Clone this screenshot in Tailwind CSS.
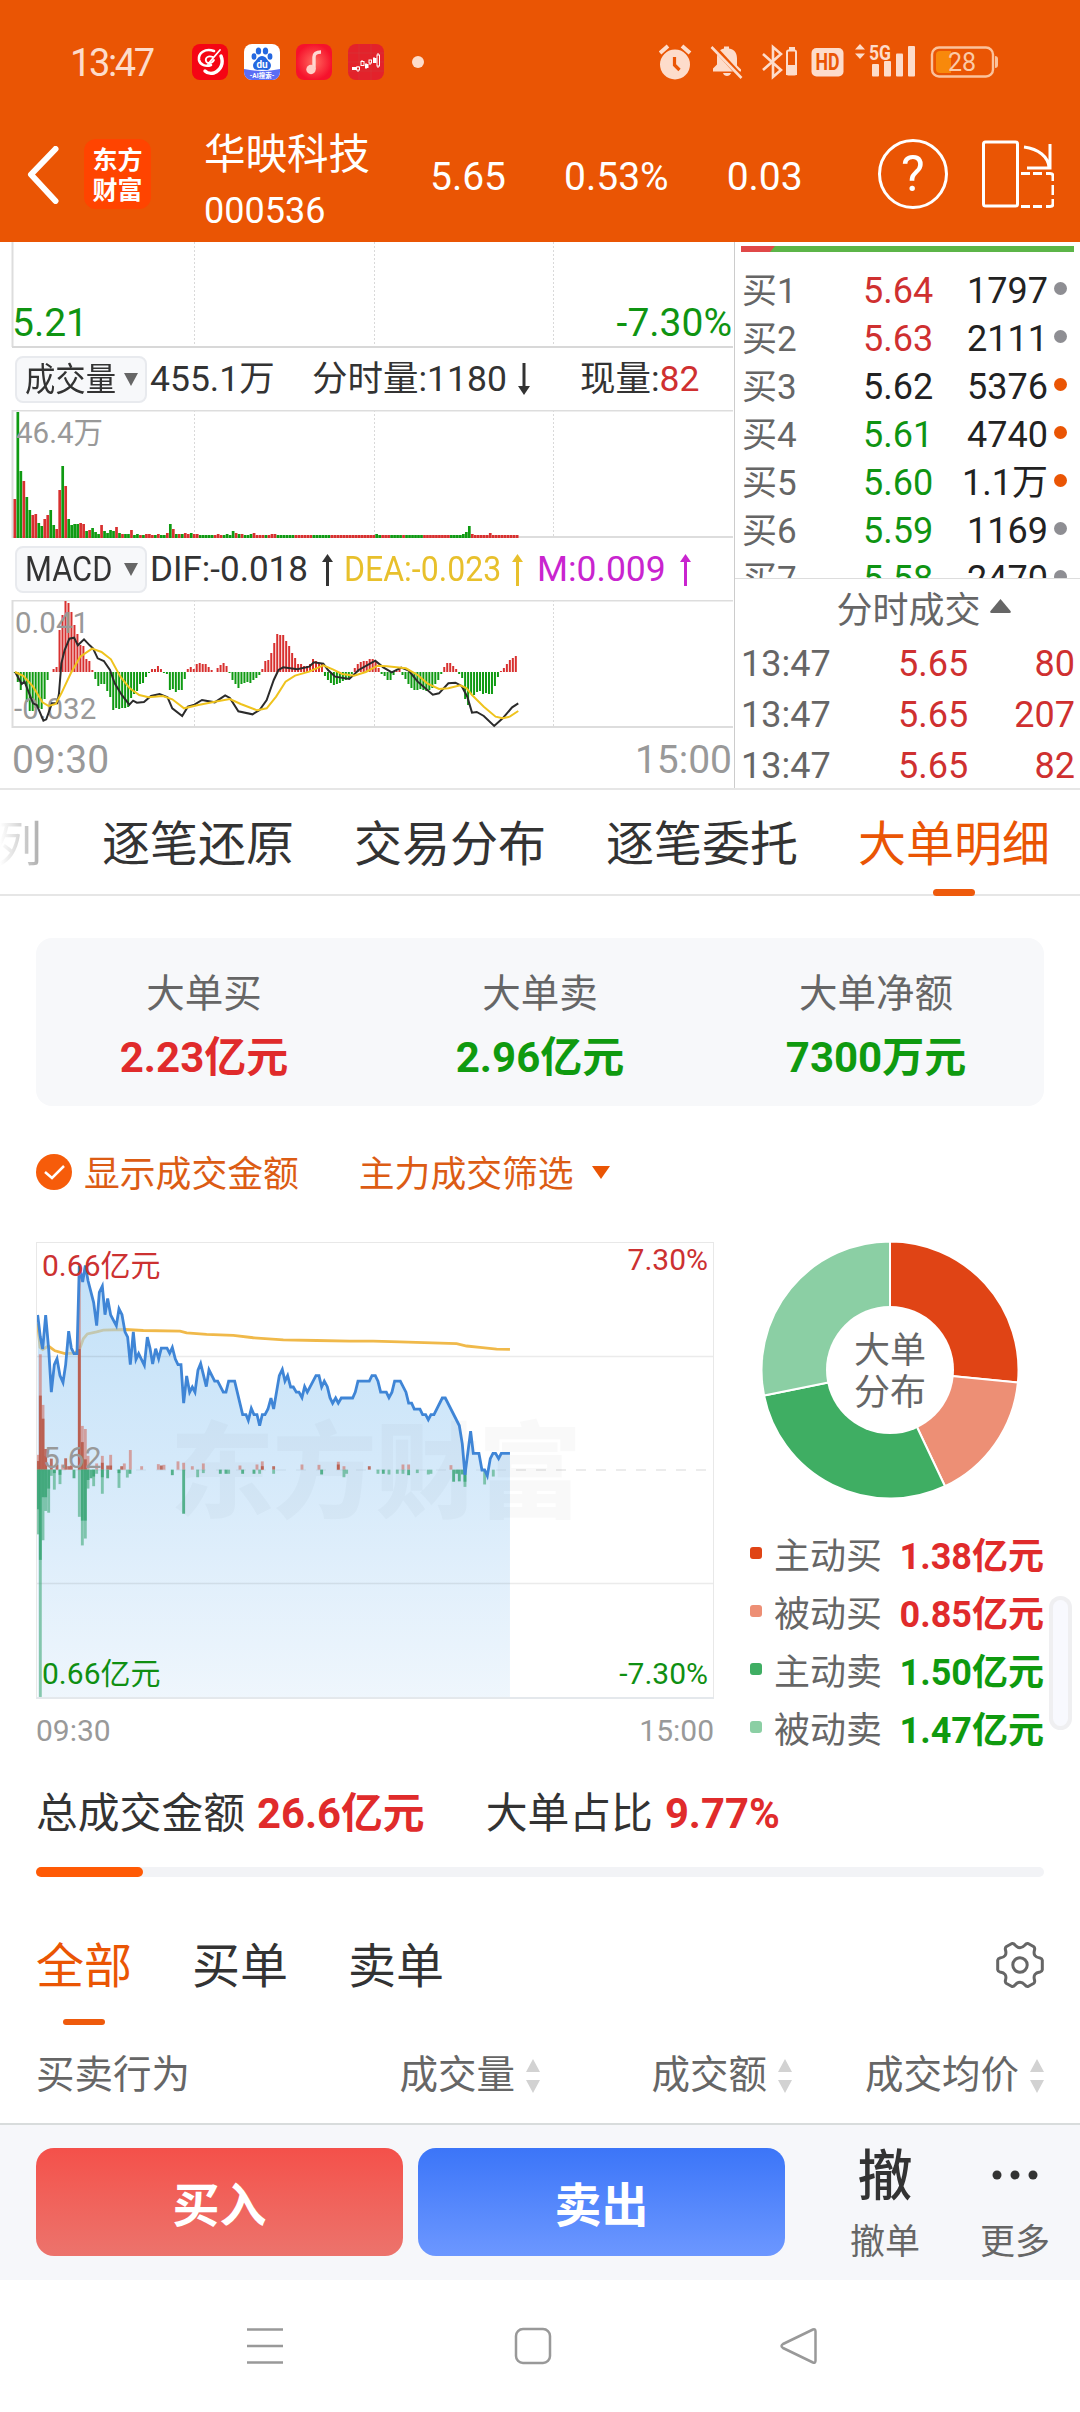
<!DOCTYPE html>
<html lang="zh-CN">
  <head>
    <meta charset="UTF-8" />
    <meta name="viewport" content="width=device-width, initial-scale=1.0" />
    <title>华映科技 000536</title>
    <script src="https://cdn.jsdelivr.net/npm/@tailwindcss/browser@4"></script>
  </head>
  <body class="w-[1080px] h-[2412px] overflow-hidden bg-white text-[#333] leading-none whitespace-nowrap font-['Roboto','Noto_Sans_CJK_SC',sans-serif]">
    <!-- Status bar + stock header -->
    <header class="h-[242px] bg-[#ea5504] text-white">
      <div class="h-[124px] flex items-center text-[#fddccb]">
        <span class="w-[122px] ml-[70px] pt-[2px] text-[38px] tracking-[-2.4px]">13:47</span>
        <div class="flex items-center gap-4">
          <svg class="size-9" viewBox="0 0 36 36">
            <rect width="36" height="36" rx="8" fill="#f50514" />
            <g fill="none" stroke="#fff" stroke-linecap="round">
              <path d="M22 7C13 4 6 9 7 16c1 5 7 7 12 5" stroke-width="2.600" />
              <path d="M29 12c3 7 0 14-7 17-4 1-7 0-9-2" stroke-width="3.400" />
              <path d="M28 6 16 20M21 13c-5-2-8 1-7 4s6 3 8-1" stroke-width="1.800" />
            </g>
          </svg>
          <svg class="size-9" viewBox="0 0 36 36">
            <rect width="36" height="36" rx="8" fill="#fff" />
            <path d="M0 25q18 4 36 0v3a8 8 0 0 1-8 8H8a8 8 0 0 1-8-8z" fill="#5a6df5" />
            <g fill="#2467e0">
              <ellipse cx="14.5" cy="7" rx="2.7" ry="3.6" />
              <ellipse cx="21.5" cy="7" rx="2.7" ry="3.6" />
              <ellipse cx="10" cy="12.5" rx="2.4" ry="3.3" />
              <ellipse cx="26" cy="12.5" rx="2.4" ry="3.3" />
              <path d="M18 12c4 0 5 4 7.500 6 3 3 1 8-3 8-3 0-6-.5-9 0-4 0-6-5-3-8 2.500-2 3.500-6 7.500-6z" />
            </g>
            <text x="18" y="24" font-size="10" font-weight="700" fill="#fff" text-anchor="middle">du</text>
            <text x="18" y="34" font-size="6.500" font-weight="700" fill="#fff" text-anchor="middle">-AI搜索-</text>
          </svg>
          <svg class="size-9" viewBox="0 0 36 36">
            <defs>
              <radialGradient id="music"><stop offset="0" stop-color="#ff6a5e" /><stop offset="1" stop-color="#f6122c" /></radialGradient>
            </defs>
            <rect width="36" height="36" rx="8" fill="url(#music)" />
            <path d="M18 25V13c0-3 2-5 7-5" fill="none" stroke="#ffd9d2" stroke-width="3.400" />
            <circle cx="15" cy="25.500" r="4.700" fill="#ffd0c8" />
          </svg>
          <svg class="size-9" viewBox="0 0 36 36">
            <rect width="36" height="36" rx="8" fill="#e3222b" />
            <path d="M0 9h36M0 18h36M0 27h36M11 0v36M23 0v36" stroke="#d53a3a" stroke-width=".6" />
            <path d="M4 25h4M10 22v6M14 16v6M18 19v6M22 16v5M26 13v6M30 9v15" stroke="#fff" stroke-width="1" />
            <g fill="#fff">
              <rect x="4" y="23" width="4" height="3" /><rect x="17" y="20" width="3.500" height="4" /><rect x="25" y="14" width="3.500" height="5" />
            </g>
            <g fill="#e3222b" stroke="#fff">
              <rect x="8.500" y="23" width="3" height="3" /><rect x="13" y="17.500" width="3" height="4" /><rect x="21" y="16" width="2.500" height="3" /><rect x="29" y="11" width="2.500" height="11" />
            </g>
          </svg>
        </div>
        <span class="size-3 ml-7 rounded-full bg-[#fddccb]"></span>

        <svg class="ml-[235px] w-[342px] h-9" viewBox="0 0 342 36" fill="#fddccb">
          <!-- alarm -->
          <g>
            <circle cx="16" cy="20.500" r="15" />
            <path d="m1 9 8-7M31 9l-8-7" stroke="#fddccb" stroke-width="4" />
            <path d="M15.500 13v8l5 5" fill="none" stroke="#ea5504" stroke-width="3.200" />
          </g>
          <!-- muted bell -->
          <path d="M65 2.500h5v2c6 1 8 5 8 10v7l4 4v2H54v-3l4-4v-7c0-5 2-8 7-9zM64 29h8c-1 4-7 4-8 0z" />
          <path d="m53 1 31 34" stroke="#ea5504" stroke-width="5" />
          <path d="m52.500 3 30 31" stroke="#fddccb" stroke-width="2.600" />
          <!-- bluetooth -->
          <path d="m104 10 18 16-8 7V3l8 7-18 16" fill="none" stroke="#fddccb" stroke-width="2.600" />
          <rect x="128" y="6.500" width="9" height="24" rx="1.500" fill="none" stroke="#fddccb" stroke-width="2" />
          <path d="M127 21h11v10h-11zM130 3h6v3h-6z" />
          <!-- HD -->
          <rect x="152.500" y="4" width="32" height="28.500" rx="5" />
          <text x="168.500" y="26" font-size="23" font-weight="700" fill="#ea5504" text-anchor="middle" textLength="24" lengthAdjust="spacingAndGlyphs">HD</text>
          <!-- signal -->
          <path d="m201 0 5 5.500h-10zM201 15l5-5.500h-10z" />
          <text x="210" y="16" font-size="21" font-weight="700" textLength="22" lengthAdjust="spacingAndGlyphs">5G</text>
          <rect x="213" y="20" width="7" height="12.500" rx="1" /><rect x="225" y="17" width="7" height="15.500" rx="1" />
          <rect x="237" y="9.500" width="7" height="23" rx="1" /><rect x="249" y="2" width="7" height="30.500" rx="1" />
          <!-- battery -->
          <rect x="273" y="3.500" width="61" height="29" rx="7" fill="none" stroke="#fbc29c" stroke-width="2.400" />
          <path d="M281 7h11v22h-11a4 4 0 0 1-4-4V11a4 4 0 0 1 4-4z" fill="#f8890b" />
          <path d="M336 12q3 0 3 3v6q0 3-3 3z" fill="#fbc29c" />
          <text x="303" y="27" font-size="25" fill="#fbcaa8" text-anchor="middle">28</text>
        </svg>
      </div>

      <div class="h-[118px] flex items-start">
        <svg class="w-8 h-[58px] ml-[27px] mt-[22px]" viewBox="0 0 32 58" fill="none" stroke="#fff" stroke-width="6" stroke-linecap="round" stroke-linejoin="round">
          <path d="M28.500 3 4 28.500 28.500 55" />
        </svg>
        <div class="w-[67px] h-[70px] ml-[25px] mt-[15px] rounded-xl bg-[#ff4400] flex flex-col items-center justify-center pt-1 text-[25px] leading-[30px] font-bold">
          <span>东方</span><span>财富</span>
        </div>
        <div class="w-[226px] ml-[53px] mt-[6px]">
          <div class="text-[41.500px] leading-[50px]">华映科技</div>
          <div class="text-[36px] leading-[62px]">000536</div>
        </div>
        <div class="flex gap-[58px] text-[39px] leading-[106px]">
          <span>5.65</span><span>0.53%</span><span>0.03</span>
        </div>
        <div class="size-[70px] ml-[75px] mt-[15px] rounded-full border-3 flex items-center justify-center text-[50px]">?</div>
        <svg class="w-[73px] h-[68px] ml-[33px] mt-4" viewBox="0 0 73 68" fill="none" stroke="#fff" stroke-width="3">
          <rect x="2.500" y="2" width="34" height="64" rx="2" />
          <path d="M43 7c15 2 24 10 25 20M69 4v24H46" />
          <path d="M40 33.500h9m3 0h9m4 0h4q3 0 3 2.500v5m0 4v10m0 4v5q0 2.500-3 2.500h-4m-4 0h-9m-3 0h-9" />
        </svg>
      </div>
    </header>

    <!-- Intraday indicators + order book -->
    <section class="h-[548px] flex border-b-2 border-[#e6e6e6]">
      <div class="w-[735px] border-r border-[#ccc]">
        <svg class="block" width="734" height="106">
          <path d="M12.500 0v105" stroke="#ddd" stroke-width="2" />
          <path d="M194.500 0v105M374.500 0v105M553.500 0v105" stroke="#d9d9d9" stroke-dasharray="2 2" />
          <path d="M12 105h721" stroke="#d8d8d8" stroke-width="2" />
          <g font-size="39" fill="#0f9412">
            <text x="12" y="94">5.21</text>
            <text x="732" y="94" text-anchor="end">-7.30%</text>
          </g>
        </svg>

        <div class="h-[62px] flex items-center pl-[15px] text-[35px]">
          <div class="w-[132px] h-[47px] shrink-0 rounded-lg border-2 border-[#e8eaee] bg-[#f7f8fa] flex items-center gap-2 pl-2">
            <span class="text-[33px] w-[91px]"><span class="inline-block origin-left scale-x-[.92]">成交量</span></span>
            <svg width="14" height="13"><path d="M0 0h14L7 13z" fill="#666" /></svg>
          </div>
          <span class="ml-[3px] w-[162px] pt-[2px] text-[35.500px]">455.1万</span>
          <span class="pt-[2px] text-[35.500px]">分时量:1180</span>
          <svg class="ml-[11px]" width="12" height="32"><path d="M6 0v26" stroke="#333" stroke-width="3" /><path d="M0 23h12L6 32z" fill="#333" /></svg>
          <span class="ml-[50px] pt-[2px] text-[35.500px]">现量:<span class="text-[#cf3030]">82</span></span>
        </div>

        <svg class="block" width="734" height="129">
          <path d="M194.500 0v127M374.500 0v127M553.500 0v127" stroke="#d9d9d9" stroke-dasharray="2 2" />
          <path d="M12 .5h721M12.500 0v128M12 127h721" fill="none" stroke="#ddd" stroke-width="2" />
          <g id="volume"></g>
          <text x="16" y="33" font-size="29.500" fill="#999">46.4万</text>
        </svg>

        <div class="h-[61px] flex items-center pl-[15px] text-[35px]">
          <div class="w-[132px] h-[47px] shrink-0 rounded-lg border-2 border-[#e8eaee] bg-[#f7f8fa] flex items-center gap-2 pl-2">
            <span class="text-[35px] w-[91px]"><span class="inline-block origin-left scale-x-[.88]">MACD</span></span>
            <svg width="14" height="13"><path d="M0 0h14L7 13z" fill="#666" /></svg>
          </div>
          <span class="ml-[3px] w-[172px]">DIF:-0.018</span>
          <svg width="11" height="32"><path d="M5.500 6v26" stroke="#333" stroke-width="3" /><path d="M0 8h11L5.500 0z" fill="#333" /></svg>
          <span class="ml-[11px] w-[168px] text-[#e8c02c]"><span class="inline-block origin-left scale-x-[.915]">DEA:-0.023</span></span>
          <svg width="11" height="32"><path d="M5.500 6v26" stroke="#e8c02c" stroke-width="3" /><path d="M0 8h11L5.500 0z" fill="#e8c02c" /></svg>
          <span class="ml-[14px] w-[143px] text-[35.500px] text-[#c924cf]">M:0.009</span>
          <svg width="11" height="32"><path d="M5.500 6v26" stroke="#c924cf" stroke-width="3" /><path d="M0 8h11L5.500 0z" fill="#c924cf" /></svg>
        </div>

        <svg class="block" width="734" height="129">
          <path d="M194.500 0v127M374.500 0v127M553.500 0v127" stroke="#d9d9d9" stroke-dasharray="2 2" />
          <path d="M12 .5h721M12.500 0v128M12 127h721" fill="none" stroke="#ddd" stroke-width="2" />
          <g id="macd"></g>
          <g font-size="29.500" fill="#999"><text x="15" y="33">0.041</text><text x="14" y="119">-0.032</text></g>
          <g transform="scale(.472 .3333) translate(0 -180)" fill="none" stroke-width="2">
            <polyline vector-effect="non-scaling-stroke" stroke="#2b2b2b" points="32,396 46,432 52,425 70,490 78,495 92,542 98,538 110,490 121,490 125,460 130,370 137,330 147,296 157,293 165,316 178,298 190,316 197,325 207,355 220,363 233,390 243,430 258,465 274,494 282,482 290,488 305,486 320,468 338,462 355,472 365,505 386,528 398,500 412,494 428,480 455,487 477,466 487,474 505,514 535,523 550,510 565,480 580,420 590,390 600,382 630,388 655,380 665,367 685,371 695,390 710,410 740,417 760,390 795,362 812,382 830,397 850,383 866,392 885,425 917,464 930,460 950,430 965,428 978,438 990,470 1000,518 1010,516 1025,528 1047,558 1065,535 1085,502 1098,490" />
            <polyline vector-effect="non-scaling-stroke" stroke="#efc31d" points="32,396 50,408 70,440 90,487 103,498 118,492 130,460 150,400 170,350 195,326 215,336 235,358 255,410 275,445 295,465 315,472 345,468 365,478 390,505 420,495 455,485 487,477 510,492 545,511 565,505 585,470 605,425 625,407 655,395 685,376 705,388 725,402 750,407 775,396 800,377 820,379 860,385 885,405 905,430 930,447 950,445 975,436 988,444 1000,465 1025,500 1050,530 1065,535 1080,530 1098,513" />
          </g>
        </svg>
        <div class="h-[62px] flex items-center justify-between pl-3 pr-[2px] text-[39px] text-[#999]">
          <span>09:30</span><span>15:00</span>
        </div>
      </div>

      <div class="flex-1 text-[36px]">
        <div class="h-[337px] overflow-hidden border-b border-[#ddd]">
          <svg class="block ml-[6px] mt-1" width="333" height="6"><path d="M0 0h333v6H0z" fill="#5cb548" /><path d="M0 0h34l-5 6H0z" fill="#e04848" /></svg>
          <div id="bids" class="mt-[15px]"></div>
        </div>
        <div class="h-[60px] flex items-center justify-center gap-[9px] pl-[32px] pt-[3px] text-[#666]">
          分时成交
          <svg class="mb-[10px]" width="21" height="14"><path d="m10.500 0 10 12q1 2-1 2h-18q-2 0-1-2z" fill="#666" /></svg>
        </div>
        <div id="ticks" class="-mt-[1px]"></div>
      </div>
    </section>

    <!-- Detail tabs -->
    <nav class="h-[106px] flex gap-[60px] border-b-2 border-[#e6e6e6] text-[48px] leading-[110px]">
      <span class="w-[42px] flex justify-end bg-linear-to-r from-white to-[#aaa] bg-clip-text text-transparent">列</span>
      <span>逐笔还原</span>
      <span>交易分布</span>
      <span>逐笔委托</span>
      <span class="relative h-[106px] text-[#ea5504]">大单明细<i class="absolute left-[75px] bottom-0 w-[42px] h-[7px] rounded-full bg-[#ee5a0c]"></i></span>
    </nav>

    <main class="h-[1227px] px-9 pt-[42px]">
      <!-- Totals -->
      <div class="h-[168px] rounded-2xl bg-[#f7f8fa] grid grid-cols-3 text-center">
        <div><div class="text-[38.500px] leading-[111px] h-[86px] text-[#666]">大单买</div><div class="text-[42px] leading-[67px] font-bold text-[#e02b2b]">2.23亿元</div></div>
        <div><div class="text-[38.500px] leading-[111px] h-[86px] text-[#666]">大单卖</div><div class="text-[42px] leading-[67px] font-bold text-[#0f9a0f]">2.96亿元</div></div>
        <div><div class="text-[38.500px] leading-[111px] h-[86px] text-[#666]">大单净额</div><div class="text-[42px] leading-[67px] font-bold text-[#0f9a0f]">7300万元</div></div>
      </div>

      <!-- Filters -->
      <div class="h-[136px] flex items-center text-[35.800px] text-[#dc5c14]">
        <svg class="mb-1" width="36" height="36"><circle cx="18" cy="18" r="18" fill="#f65c0a" /><path d="m9 18 7 6 12-12" fill="none" stroke="#fff" stroke-width="2.500" /></svg>
        <span class="ml-[12px] pt-[3px]">显示成交金额</span>
        <span class="ml-[60px] pt-[3px]">主力成交筛选</span>
        <svg class="ml-[18px] mb-1" width="18" height="13"><path d="M0 0h18L9 13z" fill="#ea5504" /></svg>
      </div>

      <div class="h-[518px] flex justify-between">
        <!-- Big order flow chart -->
        <div class="w-[678px]">
          <svg class="block" width="678" height="458">
            <defs>
              <linearGradient id="area" x1="0" y1="0" x2="0" y2="1"><stop offset="0" stop-color="#9bcdf3" /><stop offset=".5" stop-color="#bbdcf7" /><stop offset="1" stop-color="#e4f0fb" /></linearGradient>
            </defs>
            <path d="M0 228h678" stroke="#000" stroke-opacity=".1" stroke-width="1.500" stroke-dasharray="10 10" />
            <polyline transform="scale(.3333 .3444) translate(-108 -64)" fill="none" stroke="#f0b94a" stroke-width="2.800" vector-effect="non-scaling-stroke" points="113,300 120,370 128,376 145,366 165,380 195,388 225,387 240,372 250,345 262,331 290,325 310,320 375,318 430,321 540,323 560,328 620,332 700,335 760,342 850,348 950,350 1050,352 1120,352 1200,354 1370,359 1400,366 1440,370 1490,375 1530,376" />
            <g transform="scale(.3333 .3444) translate(-108 -64)">
              <path id="price-area" fill="url(#area)" fill-opacity=".6" />
            </g>
            <path d="M0 114.500h678M0 341.500h678" stroke="#000" stroke-opacity=".08" stroke-width="1.500" />
            <text x="134" y="268" font-size="104" font-weight="900" fill="#000" fill-opacity=".025" textLength="412">东方财富</text>
            <g transform="scale(.3333 .3444) translate(-108 -64)">
              <g id="flow"></g>
              <polyline id="price" fill="none" stroke="#3f85d6" stroke-width="2.800" vector-effect="non-scaling-stroke" points="113,276 121,340 128,375 137,276 146,375 154,500 163,420 171,403 180,452 189,472 197,420 206,323 214,372 222,388 231,388 238,132 248,180 256,132 264,176 281,240 290,307 298,210 307,192 315,275 323,228 332,276 349,307 357,258 366,275 375,325 383,340 391,420 400,325 408,405 416,388 433,422 442,340 450,372 458,418 467,374 476,403 484,372 501,372 509,387 517,370 526,404 534,420 543,420 551,532 560,453 569,500 577,485 585,500 594,436 602,417 619,484 627,435 644,468 653,468 670,500 678,500 686,468 704,468 728,565 738,565 745,582 754,547 762,565 771,565 779,597 787,565 795,565 804,549 813,517 821,549 838,452 847,434 855,468 863,452 872,485 880,485 889,500 897,500 906,516 914,484 922,500 948,452 957,452 965,485 973,468 982,484 990,516 998,532 1007,517 1015,532 1024,517 1058,517 1066,500 1074,468 1108,468 1116,452 1126,452 1134,468 1142,500 1159,500 1167,516 1176,500 1184,468 1201,468 1218,500 1226,532 1235,532 1243,549 1260,549 1268,565 1277,565 1285,580 1293,565 1302,565 1327,517 1336,517 1378,597 1387,650 1395,740 1412,613 1420,678 1437,678 1446,726 1454,726 1462,743 1471,693 1479,678 1487,678 1496,693 1504,678 1530,678" />
            </g>
            <path d="M0 .5h678M.5 0v457M677.500 0v457" stroke="#e8e8e8" />
            <path d="M0 456h678" stroke="#e4e8ec" stroke-width="2" />
            <g font-size="30">
              <text x="6" y="34" fill="#cc3131">0.66亿元</text>
              <text x="672" y="28" text-anchor="end" fill="#cc3131">7.30%</text>
              <text x="7" y="226" fill="#999">5.62</text>
              <text x="6" y="442" fill="#0f8f12">0.66亿元</text>
              <text x="672" y="442" text-anchor="end" fill="#0f8f12">-7.30%</text>
            </g>
          </svg>
          <div class="flex justify-between pt-[16px] text-[30px] leading-[30px] text-[#999]"><span>09:30</span><span>15:00</span></div>
        </div>

        <!-- Distribution -->
        <div class="w-[294px] flex flex-col">
          <svg class="ml-[11px]" width="258" height="258" viewBox="-129 -128 258 258">
            <g stroke="#fff" stroke-width="2">
              <path d="M0-128.500A128.500 128.500 0 0 1 127.900 12.500L0 0z" fill="#e04415" />
              <path d="M127.900 12.500A128.500 128.500 0 0 1 55 116.200L0 0z" fill="#ed8f75" />
              <path d="M55 116.200A128.500 128.500 0 0 1-125.900 25.600L0 0z" fill="#3fae63" />
              <path d="M-125.900 25.600A128.500 128.500 0 0 1 0-128.500L0 0z" fill="#8bcfa4" />
            </g>
            <circle r="64" fill="#fff" />
            <g font-size="36" fill="#666" text-anchor="middle"><text y="-7">大单</text><text y="35">分布</text></g>
          </svg>
          <div id="legend" class="mt-[26px] text-[36px]"></div>
        </div>
      </div>

      <!-- Turnover share -->
      <div class="h-[107px] flex items-center text-[41.800px]">
        <span>总成交金额</span>
        <b class="ml-3 text-[#e02b2b]">26.6亿元</b>
        <span class="ml-[61px]">大单占比</span>
        <b class="ml-3 text-[#e02b2b]">9.77%</b>
      </div>
      <div class="h-[10px] rounded-full bg-[#f2f3f6]"><div class="h-full w-[107px] rounded-full bg-[#ff5a05]"></div></div>

      <!-- Order list -->
      <div class="h-[148px] pt-[65px] flex justify-between text-[48px] leading-[50px]">
        <div class="flex gap-[60px]">
          <span class="relative text-[#ea5504]">全部<i class="absolute left-[27px] top-[77px] w-[42px] h-[6px] rounded-full bg-[#ee5a0c]"></i></span>
          <span>买单</span>
          <span>卖单</span>
        </div>
        <svg class="w-[50px] h-12 -mr-[1px]" viewBox="-25 -23 50 48" fill="none" stroke="#666" stroke-width="3" stroke-linejoin="round">
          <path d="M-8.500-21.300Q-6.500-22-5-20Q0-14.500 5-20Q6.500-22 8.500-21.300L13.500-18.500Q15.200-17.300 14.500-15Q12.500-8 20-7Q22-6.600 22.300-4.800V4.800Q22 6.600 20 7Q12.500 8 14.500 15Q15.200 17.300 13.500 18.500L8.500 21.300Q6.500 22 5 20Q0 14.500-5 20Q-6.500 22-8.500 21.300L-13.500 18.500Q-15.200 17.300-14.500 15Q-12.500 8-20 7Q-22 6.600-22.300 4.800V-4.800Q-22-6.600-20-7Q-12.500-8-14.500-15Q-15.200-17.300-13.500-18.500z" />
          <circle r="7.200" />
        </svg>
      </div>
      <div class="h-[98px] pt-[3px] grid grid-cols-[314px_190px_252px_252px] items-center text-[38.500px] text-[#666]" id="columns"></div>
    </main>

    <!-- Trade actions -->
    <footer class="h-[157px] bg-[#f6f7fa] border-t-2 border-[#d8dcdc] pl-9 pt-[23px] flex">
      <button class="w-[367px] h-[108px] pt-[6px] rounded-[18px] bg-linear-to-b from-[#f4504a] to-[#ec736c] text-[47px] font-bold text-white">买入</button>
      <button class="w-[367px] h-[108px] pt-[6px] ml-[15px] rounded-[18px] bg-linear-to-b from-[#3b75f8] to-[#6c97ff] text-[47px] font-bold text-white">卖出</button>
      <div class="w-[70px] ml-[65px] flex flex-col items-center">
        <span class="text-[55px] leading-[56px] font-medium">撤</span>
        <span class="mt-[21px] text-[35px] text-[#666]">撤单</span>
      </div>
      <div class="w-[70px] ml-[60px] flex flex-col items-center">
        <svg width="50" height="56" fill="#333"><circle cx="7" cy="27" r="4.500" /><circle cx="25" cy="27" r="4.500" /><circle cx="43" cy="27" r="4.500" /></svg>
        <span class="mt-[21px] text-[35px] text-[#666]">更多</span>
      </div>
    </footer>

    <!-- System navigation -->
    <div class="h-[132px] flex items-center pl-[246px] gap-[230px]">
      <svg width="38" height="38" stroke="#999" stroke-width="2.500"><path d="M1 2.500h36M1 19h36M1 35.500h36" /></svg>
      <svg width="38" height="38" fill="none" stroke="#999" stroke-width="2.500"><rect x="2" y="2" width="34" height="34" rx="7" /></svg>
      <svg class="-ml-[2px]" width="38" height="38" fill="none" stroke="#999" stroke-width="2.500" stroke-linejoin="round"><path d="M33 2.500q2.500-1 2.500 2v29q0 3-2.500 2L3 21q-3-2 0-4z" /></svg>
    </div>

    <!-- Floating edge handle -->
    <div class="absolute left-[1053px] top-[1600px] w-[15px] h-[126px] rounded-full bg-[#f8f9fe] ring-4 ring-[#efeff1]"></div>

    <script>
      const RED = "#d8302f";
      const GREEN = "#0f9a12";
      const bar = (x, y, w, h, fill) => `<rect x="${x}" y="${y}" width="${w}" height="${h}" fill="${fill}"/>`;

      // Volume per minute, minus sign = falling minute
      const volume = [
        39, -126, -67, 57, -41, -28, 23, 24, -15, -12, 19, 23, -28, -13, 9, 48, -72, 52, -19, -13, -14, -14, 15, 14,
        -7, 8, -10, -6, -4, 13, -7, -5, -8, -7, 11, -5, 4, -4, -4, 8, -3, -4, 3, -3, 4, 4, 3, -3, 4, -3, -3, 5, -14, 9,
        -4, 4, -4, 5, 4, -5, 4, 4, -3, -3, -3, -3, -3, 3, 4, 3, -3, -4, -3, -7, 5, -4, 4, -3, -3, -4, 5, 3, 3, 3, -3, 3, 4, 4,
      ];
      while (volume.length < 169) {
        const i = volume.length;
        const up = (i > 93 && i < 100) || (i > 105 && i < 121) || (i > 122 && i < 126) || (i > 129 && i < 131) || (i > 136 && i < 146) || i > 152;
        volume.push(up ? 3 : -3);
      }
      volume[121] = -4;
      volume[150] = -4;
      volume[151] = -6;
      volume[152] = -12;
      volume[153] = 4;
      volume[159] = 5;
      document.getElementById("volume").innerHTML = volume
        .map((v, i) => bar(13.5 + i * 2.99, 128 - Math.abs(v), 2.7, Math.abs(v), v > 0 ? RED : GREEN))
        .join("");

      const macd = [
        -1, -10, -18, -12, -30, -39, -39, -36, -36, -37, -27, -8, 0, 3, 5, 42, 57, 71, 69, 60, 47, 38, 27, 26, 13, 11, 2,
        -7, -14, -12, -12, -19, -25, -38, -36, -37, -36, -36, -35, -26, -22, -19, -12, -11, -5, -1, 3, 3, 6, 3, -1, -2,
        -18, -17, -20, -18, -18, -7, 3, 5, 3, 8, 9, 8, 8, 5, 2, 0, 4, 7, 9, 6, -1, -8, -12, -16, -12, -11, -10, -11, -8,
        -6, -3, 3, 11, 12, 19, 29, 38, 37, 37, 31, 26, 19, 14, 8, 8, 6, 6, 8, 13, 11, 9, 8, -4, -8, -11, -13, -12, -11,
        -9, -8, -6, -2, 4, 8, 10, 11, 11, 13, 13, 11, 4, -2, -4, -8, -8, -3, 1, 4, -3, -7, -12, -16, -18, -18, -17, -18,
        -19, -18, -16, -12, -8, -2, 5, 9, 9, 6, 3, -2, -6, -27, -33, -22, -23, -20, -19, -22, -21, -22, -22, -14, -5, 1,
        4, 8, 12, 14, 16,
      ];
      document.getElementById("macd").innerHTML = macd
        .map((v, i) => bar(13.8 + (i * 504) / macd.length, v > 0 ? 72 - v : 72, 2, Math.abs(v), v > 0 ? RED : GREEN))
        .join("");

      // Big order amounts around the middle axis: [x, height] pairs
      const flow = [
        { fill: "#d0605088", up: true, data: [[114, 43], [121, 335], [129, 188], [137, 40], [188, 15], [238, 590], [247, 127], [256, 118], [264, 40], [290, 18], [307, 40], [332, 43], [373, 18], [391, 57], [425, 10], [475, 16], [492, 14], [534, 24], [551, 20], [577, 10], [610, 18], [720, 12], [771, 15], [787, 24], [906, 15], [957, 14], [1015, 23], [1032, 10], [1209, 15], [1226, 15], [1353, 13]] },
        { fill: "#b4503ecc", up: true, data: [[114, 25], [121, 215], [129, 148], [137, 60], [154, 32], [171, 15], [197, 33], [206, 10], [214, 12], [238, 350], [247, 80], [256, 30], [307, 20], [323, 12], [332, 12], [365, 10], [484, 12], [787, 10], [821, 10], [1015, 15], [1108, 10]] },
        { fill: "#3fa97899", up: false, data: [[114, 188], [121, 660], [129, 205], [137, 120], [146, 125], [154, 18], [163, 58], [180, 42], [238, 137], [247, 220], [256, 200], [264, 55], [281, 48], [290, 12], [307, 70], [357, 53], [382, 23], [593, 22], [610, 10], [686, 12], [779, 12], [821, 12], [1032, 22], [1040, 12], [1134, 12], [1167, 14], [1192, 12], [1209, 12], [1252, 10], [1285, 14], [1293, 12], [1395, 50], [1454, 43], [1480, 20]] },
        { fill: "#35a272cc", up: false, data: [[114, 115], [121, 262], [129, 80], [137, 80], [146, 55], [163, 10], [180, 15], [222, 25], [247, 148], [256, 148], [264, 30], [273, 25], [281, 20], [307, 22], [323, 25], [357, 10], [390, 12], [517, 16], [551, 128], [661, 12], [678, 12], [728, 12], [762, 12], [965, 14], [1150, 12], [1226, 16], [1361, 35], [1370, 12], [1378, 34], [1387, 14], [1395, 35]] },
      ];
      document.getElementById("flow").innerHTML = flow
        .map(({ fill, up, data }) => data.map(([x, h]) => bar(x - 4.3, up ? 725 - h : 725, 8.6, h, fill)).join(""))
        .join("");

      const price = document.getElementById("price").getAttribute("points");
      document.getElementById("price-area").setAttribute("d", `M113 1387L${price}V1387z`);

      const bids = [
        [1, "5.64", "1797", "text-[#cf3030]", "bg-[#8e8e93]"],
        [2, "5.63", "2111", "text-[#cf3030]", "bg-[#8e8e93]"],
        [3, "5.62", "5376", "text-[#222]", "bg-[#ea5504]"],
        [4, "5.61", "4740", "text-[#0f9412]", "bg-[#ea5504]"],
        [5, "5.60", "1.1万", "text-[#0f9412]", "bg-[#ea5504]"],
        [6, "5.59", "1169", "text-[#0f9412]", "bg-[#8e8e93]"],
        [7, "5.58", "2470", "text-[#0f9412]", "bg-[#8e8e93]"],
      ];
      document.getElementById("bids").innerHTML = bids
        .map(
          ([n, p, v, color, dot]) => `
            <div class="h-12 flex items-center pl-[7px]">
              <span class="w-[121px] text-[35px] text-[#666]">买${n}</span>
              <span class="w-[70px] ${color}">${p}</span>
              <span class="w-[115px] text-right text-[#222]">${v}</span>
              <i class="size-[13px] ml-[6px] mb-[5px] rounded-full ${dot}"></i>
            </div>`
        )
        .join("");

      document.getElementById("ticks").innerHTML = ["80", "207", "82"]
        .map(
          (v) => `
            <div class="h-[51px] flex items-center pl-[6px] pr-[5px]">
              <span class="w-[157px] text-[#666]">13:47</span>
              <span class="text-[#cf3030]">5.65</span>
              <span class="ml-auto text-[#cf3030]">${v}</span>
            </div>`
        )
        .join("");

      const legend = [
        ["主动买", "1.38亿元", "bg-[#e04415]", "text-[#e02b2b]"],
        ["被动买", "0.85亿元", "bg-[#ed8f75]", "text-[#e02b2b]"],
        ["主动卖", "1.50亿元", "bg-[#3fae63]", "text-[#0f9a0f]"],
        ["被动卖", "1.47亿元", "bg-[#8bcfa4]", "text-[#0f9a0f]"],
      ];
      document.getElementById("legend").innerHTML = legend
        .map(
          ([name, value, dot, color]) => `
            <div class="h-[58px] flex items-center">
              <i class="size-3 mb-1 rounded-[3px] ${dot}"></i>
              <span class="ml-3 pt-[3px] text-[#666]">${name}</span>
              <b class="ml-auto pt-[3px] ${color}">${value}</b>
            </div>`
        )
        .join("");

      const sorter = `<svg width="14" height="34" fill="#d2d2d2"><path d="M7 0l7 13H0zM7 34l7-13H0z"/></svg>`;
      document.getElementById("columns").innerHTML = ["买卖行为", "成交量", "成交额", "成交均价"]
        .map((name, i) => (i ? `<span class="flex items-center justify-end gap-[11px]">${name}${sorter}</span>` : `<span>${name}</span>`))
        .join("");
    </script>
  </body>
</html>
